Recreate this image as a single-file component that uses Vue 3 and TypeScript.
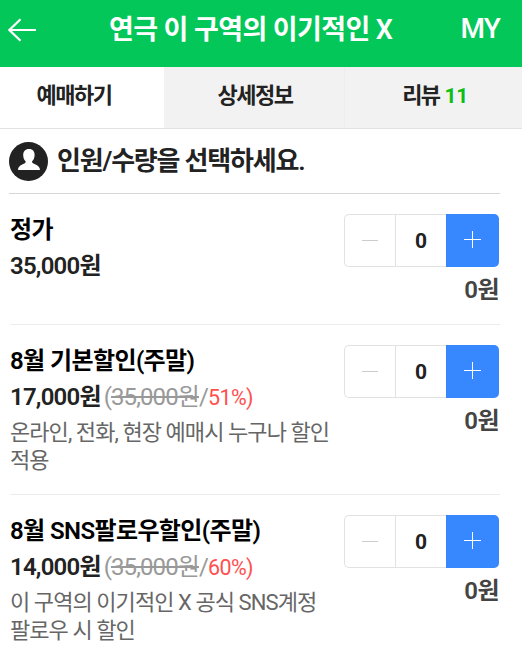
<script setup lang="ts">
import { ref } from 'vue'

interface Ticket {
  name: string
  price: number
  original?: number
  rate?: number
  description?: string[]
  count: number
}

const tickets = ref<Ticket[]>([
  { name: '정가', price: 35000, count: 0 },
  {
    name: '8월 기본할인(주말)',
    price: 17000,
    original: 35000,
    rate: 51,
    description: ['온라인, 전화, 현장 예매시 누구나 할인', '적용'],
    count: 0,
  },
  {
    name: '8월 SNS팔로우할인(주말)',
    price: 14000,
    original: 35000,
    rate: 60,
    description: ['이 구역의 이기적인 X 공식 SNS계정', '팔로우 시 할인'],
    count: 0,
  },
])

const won = (value: number): string => value.toLocaleString('en-US') + '원'

const change = (ticket: Ticket, step: number): void => {
  ticket.count = Math.max(0, ticket.count + step)
}
</script>

<template>
  <div class="page">
    <header class="top">
      <svg class="back" width="28" height="24" viewBox="0 0 28 24">
        <path d="M12.5 1.2 1.4 12l11.1 10.8M1.6 12H28" fill="none" stroke="#fff" stroke-width="2.2" />
      </svg>
      <h1>연극 이 구역의 이기적인 X</h1>
      <span class="my">MY</span>
    </header>
    <nav class="tabs">
      <span class="tab active">예매하기</span>
      <span class="tab">상세정보</span>
      <span class="tab">리뷰 <em>11</em></span>
    </nav>
    <main>
      <div class="heading">
        <svg width="39" height="39" viewBox="0 0 39 39">
          <circle cx="19.5" cy="19.5" r="19.5" fill="#222" />
          <path
            d="M20 7c3.900 0 5.800 2.700 5.600 6.200-.1 2.900-1.200 4.900-2.500 6.100v1c0 1.700 7.900 2.200 7.900 7.700H9c0-5.500 7.600-6 7.600-7.700v-1c-1.300-1.200-2.300-3.200-2.400-6.100C14.100 9.700 16.200 7 20 7z"
            fill="#fff"
          />
        </svg>
        <h2>인원/수량을 선택하세요.</h2>
      </div>
      <ul>
        <li v-for="ticket in tickets" :key="ticket.name">
          <div class="info">
            <h3>{{ ticket.name }}</h3>
            <div class="price">
              <strong>{{ won(ticket.price) }}</strong>
              <span v-if="ticket.original" class="old">(<s>{{ won(ticket.original) }}</s>/</span>
              <span v-if="ticket.rate" class="rate">{{ ticket.rate }}%)</span>
            </div>
            <p v-for="line in ticket.description" :key="line">{{ line }}</p>
          </div>
          <div class="side">
            <div class="stepper">
              <button class="minus" @click="change(ticket, -1)">
                <svg width="16" height="3" viewBox="0 0 16 3"><path d="M0 1.500h16" stroke="#ccc" /></svg>
              </button>
              <span class="count">{{ ticket.count }}</span>
              <button class="plus" @click="change(ticket, 1)">
                <svg width="17" height="17" viewBox="0 0 17 17"><path d="M0 8.500h17M8.500 0v17" stroke="#fff" /></svg>
              </button>
            </div>
            <div class="total">{{ won(ticket.price * ticket.count) }}</div>
          </div>
        </li>
      </ul>
    </main>
  </div>
</template>

<style>
body {
  background: #fff;
  overflow: hidden;
}
</style>

<style scoped>
.page {
  width: 522px;
  height: 663px;
  overflow: hidden;
  background: #fff;
  color: #222;
  font-family: Roboto, 'Noto Sans CJK KR', sans-serif;
  white-space: nowrap;
}
h1, h2, h3, p, ul {
  margin: 0;
  padding: 0;
  font-weight: 600;
}
.top {
  display: grid;
  grid-template-columns: 101px 283px 1fr;
  align-items: center;
  height: 67px;
  padding: 0 22px 0 8px;
  box-sizing: border-box;
  background: #04c75a;
  color: #fff;
}
.back {
  margin-bottom: 7px;
}
h1 {
  font-size: 27px;
  line-height: 40px;
  letter-spacing: -0.6px;
  margin-bottom: 8px;
}
.my {
  justify-self: end;
  font-size: 28px;
  line-height: 40px;
  font-weight: 500;
  letter-spacing: -0.8px;
  margin-bottom: 10px;
}
.tabs {
  display: grid;
  grid-template-columns: 164px 181px 1fr;
  height: 62px;
  box-sizing: border-box;
  border-bottom: 1px solid #e2e2e2;
}
.tab {
  padding: 9px 0 0 2px;
  box-sizing: border-box;
  border-right: 1px solid #eee;
  background: #f2f2f2;
  text-align: center;
  font-size: 22px;
  line-height: 40px;
  font-weight: 600;
  letter-spacing: -1.5px;
}
.tab.active {
  background: #fff;
  padding: 9px 15px 0 0;
  border-right-color: #fff;
}
.tab:last-child {
  padding-left: 3px;
  border-right: 0;
}
.tab em {
  font-style: normal;
  font-size: 21px;
  font-weight: 700;
  color: #0abe16;
  letter-spacing: -0.4px;
  margin-left: 1px;
}
main {
  padding: 0 22px 0 9px;
}
.heading {
  display: flex;
  align-items: center;
  gap: 9px;
  height: 65px;
  box-sizing: border-box;
  border-bottom: 1px solid #d6d6d6;
}
h2 {
  font-size: 26px;
  line-height: 40px;
  letter-spacing: -1.2px;
  margin-bottom: 1px;
}
ul {
  list-style: none;
}
li {
  display: flex;
  justify-content: space-between;
  box-sizing: border-box;
  height: 131px;
  margin-left: 1px;
  padding: 20px 1px 0 0;
  border-bottom: 1px solid #ededed;
}
li:nth-child(n + 2) {
  height: 170px;
}
h3 {
  font-size: 24px;
  line-height: 33px;
  letter-spacing: -0.6px;
  color: #000;
}
.price {
  display: flex;
  align-items: baseline;
  height: 41px;
  line-height: 38px;
  font-size: 24px;
  letter-spacing: -0.8px;
}
.price strong {
  font-weight: 600;
}
.old {
  margin-left: 3px;
  font-weight: 400;
  letter-spacing: -0.9px;
  color: #999;
}
.rate {
  font-size: 21.5px;
  font-weight: 400;
  letter-spacing: -0.6px;
  color: #ff5050;
}
p {
  font-size: 22px;
  line-height: 28px;
  font-weight: 400;
  letter-spacing: -0.93px;
  color: #666;
}
.stepper {
  display: flex;
  width: 155px;
  height: 53px;
  box-sizing: border-box;
  border: 1px solid #e2e2e2;
  border-right: 0;
  border-radius: 5px;
}
button {
  display: flex;
  align-items: center;
  justify-content: center;
  padding: 0;
  border: 0;
  background: none;
}
.minus {
  width: 50px;
}
.count {
  width: 51px;
  box-sizing: border-box;
  border-left: 1px solid #e2e2e2;
  text-align: center;
  font-size: 21px;
  line-height: 52px;
  font-weight: 700;
}
.plus {
  width: 53px;
  margin: -1px 0;
  padding-bottom: 2px;
  border-radius: 0 5px 5px 0;
  background: #3787ff;
}
.total {
  text-align: right;
  font-size: 24px;
  line-height: 46px;
  font-weight: 600;
  letter-spacing: -0.5px;
  color: #444;
}
</style>
